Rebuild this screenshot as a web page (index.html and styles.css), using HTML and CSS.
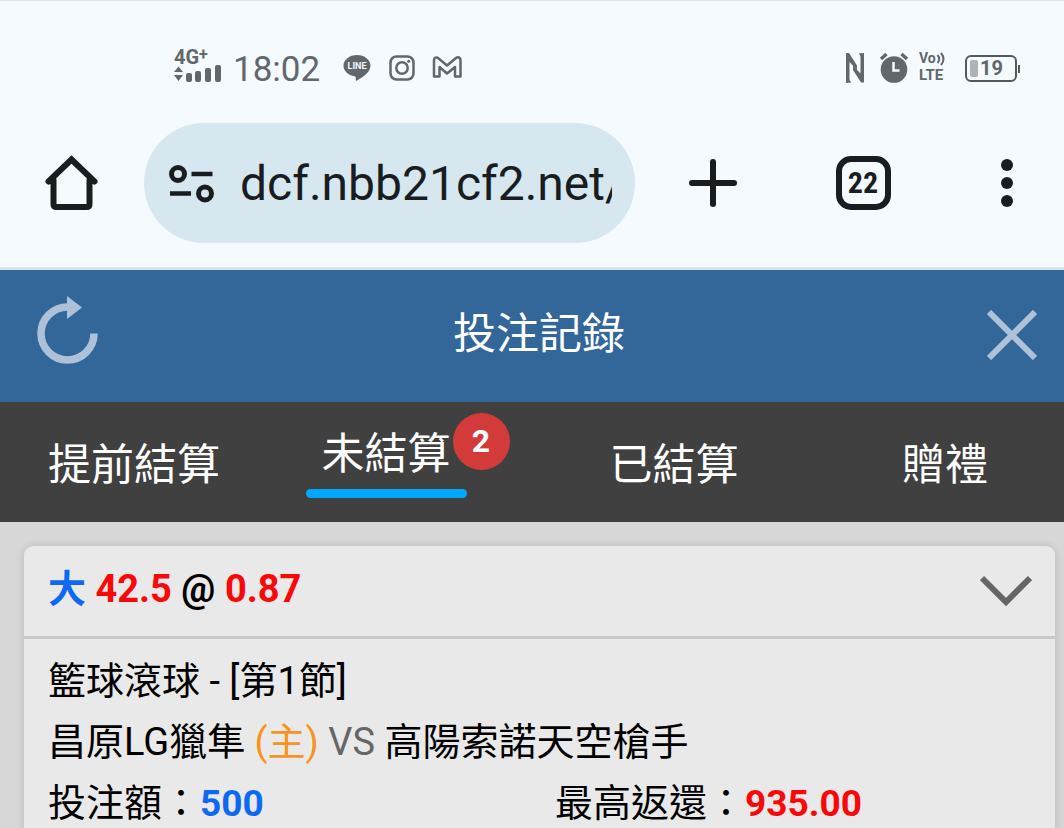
FILE: index.html
```html
<!DOCTYPE html>
<html lang="zh-Hant">
<head>
<meta charset="utf-8">
<meta name="viewport" content="width=device-width, initial-scale=1">
<title>投注記錄</title>
<link rel="stylesheet" href="styles.css">
</head>
<body>
<div class="status-bar">
  <div class="status-group status-left">
    <div class="signal">
      <span class="signal-label">4G<span class="plus">+</span></span>
      <svg width="50" height="17" viewBox="0 0 50 17" fill="currentColor" aria-hidden="true">
        <path d="M0 7 4.500 1.500 9 7zM0 10h9l-4.500 6z"/>
        <rect x="12" y="8" width="6" height="9" rx="2"/><rect x="21" y="6" width="6" height="11" rx="2"/><rect x="31" y="3" width="6" height="14" rx="2"/><rect x="41" y="0" width="6" height="17" rx="2"/>
      </svg>
    </div>
    <span class="clock">18:02</span>
    <svg class="app-line" width="28" height="28" viewBox="0 0 28 28" aria-hidden="true">
      <path fill="currentColor" d="M14 1C6.500 1 .500 5.800.500 11.700c0 5.200 4.700 9.600 11 10.500 1.600.4 1.500 1.700 1.200 3.800 0 .8.500 1 1.400.500 3.500-2 13.400-8 13.400-14.800C27.500 5.800 21.500 1 14 1z"/>
      <text x="14" y="15" text-anchor="middle" class="line-text">LINE</text>
    </svg>
    <svg class="app-insta" width="26" height="26" viewBox="0 0 26 26" fill="none" stroke="currentColor" stroke-width="2.500" aria-hidden="true">
      <rect x="1.500" y="1.500" width="23" height="23" rx="6"/><circle cx="13" cy="13" r="5.700"/><circle cx="19.700" cy="6.300" r="1.500" fill="currentColor" stroke="none"/>
    </svg>
    <svg width="30" height="24" viewBox="0 0 30 24" fill="none" stroke="currentColor" stroke-width="2.500" stroke-linejoin="round" aria-hidden="true">
      <path d="M2 20.500V4c0-2.500 2.500-3 4-2l9 7.500L24 2c2-1.500 4.500-.5 4.500 2v16.500H23V11l-8 6.500L7.500 11v9.500z"/>
    </svg>
  </div>
  <div class="status-group status-right">
    <svg width="20" height="32" viewBox="0 0 20 32" fill="currentColor" aria-hidden="true">
      <path d="M1 1h3l8 12.500v4.500L4.500 10v17q0 2.500 2 3.500L1 31z"/>
      <path d="M19 30.500h-3L8 18v-4.500L15.500 21.500V5q0-2.500-2-3.500l5.500-.5z"/>
    </svg>
    <svg class="alarm" width="30" height="32" viewBox="0 0 30 32" aria-hidden="true">
      <circle cx="15" cy="17.500" r="13.300" fill="currentColor"/>
      <path d="M2 7 7.500 2M28 7l-5.500-5" stroke="currentColor" stroke-width="3.500" fill="none"/>
      <path d="M14.500 10v8.500h6" fill="none" stroke="#f5faff" stroke-width="2.500"/>
    </svg>
    <svg class="volte" width="30" height="34" viewBox="0 0 30 34" aria-hidden="true">
      <text x="0" y="12" class="vo-text">Vo</text><text x="0" y="29" class="lte-text">LTE</text>
      <path d="M18.500 4q3.500 4 0 8M22 2q5 6 0 12" fill="none" stroke="currentColor" stroke-width="2"/>
    </svg>
    <div class="battery"><span class="battery-level"></span>19</div>
  </div>
</div>

<div class="toolbar">
  <button class="tool-button home" aria-label="首頁">
    <svg width="56" height="56" viewBox="0 0 56 56" fill="none" stroke="currentColor" stroke-width="6" stroke-linecap="round">
      <path d="M4.500 26.500 27.500 4.500l23 22M9.500 25v24q0 3 3 3h30q3 0 3-3V25"/>
    </svg>
  </button>
  <div class="address">
    <svg width="46" height="38" viewBox="0 0 46 38" fill="none" stroke="currentColor" stroke-width="5" aria-hidden="true">
      <circle cx="9" cy="9" r="6.500"/><path d="M22.500 9h21M1 28.500h21" stroke-width="4.500"/><circle cx="36" cy="28.500" r="6.500"/>
    </svg>
    <input class="url" type="text" aria-label="網址" value="dcf.nbb21cf2.net/" readonly>
  </div>
  <button class="tool-button add" aria-label="新分頁">
    <svg width="48" height="48" viewBox="0 0 48 48" fill="none" stroke="currentColor" stroke-width="6" stroke-linecap="round"><path d="M24 3v42M3 24h42"/></svg>
  </button>
  <button class="tool-button pages"><span class="page-count">22</span></button>
  <button class="tool-button more" aria-label="選單">
    <svg width="12" height="48" viewBox="0 0 12 48" fill="currentColor"><circle cx="6" cy="6" r="6"/><circle cx="6" cy="24" r="6"/><circle cx="6" cy="42" r="6"/></svg>
  </button>
</div>

<header class="page-header">
  <button class="header-button" aria-label="重新整理">
    <svg width="62" height="68" viewBox="0 0 62 68">
      <path d="M30.500 11A26.500 26.500 0 1 0 57 37.500" fill="none" stroke="currentColor" stroke-width="7.500"/><path d="M30 0 45 11.500 30 23z" fill="currentColor"/>
    </svg>
  </button>
  <h1 class="page-title">投注記錄</h1>
  <button class="header-button close" aria-label="關閉">
    <svg width="50" height="50" viewBox="0 0 50 50" fill="none" stroke="currentColor" stroke-width="6"><path d="m2 2 46 46M48 2 2 48"/></svg>
  </button>
</header>

<nav class="tabs">
  <a class="tab" href="#early">提前結算</a>
  <a class="tab active" href="#open" aria-current="page">未結算<span class="badge">2</span></a>
  <a class="tab" href="#settled">已結算</a>
  <a class="tab" href="#gifts">贈禮</a>
</nav>

<main class="content">
  <article class="bet">
    <header class="bet-header">
      <h2 class="pick"><span class="blue">大</span> <span class="red">42.5</span> @ <span class="red">0.87</span></h2>
      <button class="toggle" aria-label="收合">
        <svg width="52" height="32" viewBox="0 0 52 32" fill="none" stroke="currentColor" stroke-width="6"><path d="m2 3 24 24L50 3"/></svg>
      </button>
    </header>
    <div class="bet-body">
      <p class="row">籃球滾球 - [第1節]</p>
      <p class="row">昌原LG獵隼 <span class="host">(主)</span> <span class="versus">VS</span> 高陽索諾天空槍手</p>
      <div class="row amounts">
        <p class="amount">投注額：<strong class="blue">500</strong></p>
        <p class="amount">最高返還：<strong class="red">935.00</strong></p>
      </div>
    </div>
  </article>
</main>
</body>
</html>
```
FILE: styles.css
```css
* { box-sizing: border-box; }

body {
  margin: 0;
  min-height: 100vh;
  background: #d7d7d7;
  color: #000;
  font-family: Roboto, "Noto Sans CJK TC", sans-serif;
  overflow: hidden;
}

svg { display: block; flex: none; }
h1, h2, p { margin: 0; font-weight: 400; }

button {
  display: flex;
  align-items: center;
  justify-content: center;
  padding: 0;
  border: 0;
  background: none;
  color: inherit;
  font: inherit;
}

/* Phone status bar */
.status-bar {
  display: flex;
  justify-content: space-between;
  height: 123px;
  padding: 12px 47px 0 174px;
  border-top: 1px solid #e0e4e8;
  background: #f5faff;
  color: #62676b;
}
.status-group { display: flex; align-items: center; }
.signal { width: 50px; margin: 0 9px 6px 0; }
.signal-label {
  display: block;
  font: 700 20px/16px Roboto, sans-serif;
}
.plus { font-size: 16px; vertical-align: 4px; line-height: 1px; }
.clock { font-size: 35px; line-height: 40px; margin: 3px 23px 0 0; }
.app-line { margin-right: 18px; }
.app-insta { margin-right: 17px; }
.line-text { font: 700 9px Roboto, sans-serif; fill: #f5faff; }
.alarm { margin-left: 14px; }
.volte { margin-left: 10px; }
.vo-text { font: 700 14px Roboto, sans-serif; fill: currentColor; }
.lte-text { font: 700 15px Roboto, sans-serif; fill: currentColor; }
.battery {
  position: relative;
  display: flex;
  align-items: center;
  gap: 2px;
  width: 52px;
  height: 27px;
  margin-left: 16px;
  padding-left: 3px;
  border: 2px solid #55595c;
  border-radius: 6px;
  font-size: 20px;
  font-weight: 700;
}
.battery::after {
  content: "";
  position: absolute;
  right: -5px;
  top: 8px;
  width: 2px;
  height: 8px;
  background: #55595c;
}
.battery-level { width: 8px; height: 17px; border-radius: 2px; background: #aeb3b7; }

/* Browser toolbar */
.toolbar {
  display: flex;
  align-items: flex-start;
  height: 147px;
  border-bottom: 3px solid #d6e4ee;
  background: #f5faff;
  color: #191d1f;
}
.tool-button { flex: none; height: 120px; }
.home, .pages { width: 144px; }
.add { width: 156px; }
.more { width: 129px; justify-content: flex-end; padding-right: 51px; }
.address {
  display: flex;
  flex: 1;
  align-items: center;
  gap: 25px;
  min-width: 0;
  height: 120px;
  padding: 2px 23px 0 25px;
  border-radius: 60px;
  background: #d7e7ef;
}
.url {
  flex: 1;
  min-width: 0;
  padding: 0;
  border: 0;
  outline: 0;
  background: none;
  color: inherit;
  font: 400 48px/60px Roboto, sans-serif;
}
.page-count {
  width: 55px;
  height: 54px;
  border: 6px solid;
  border-radius: 15px;
  font: 700 30px/42px "Roboto Condensed", "Liberation Sans Narrow", Roboto, sans-serif;
}

/* Page header */
.page-header {
  display: flex;
  align-items: center;
  justify-content: space-between;
  height: 132px;
  padding: 0 27px 12px 37px;
  background: #336699;
  color: #fff;
}
.header-button { width: 62px; color: #adc2da; }
.close { width: 58px; justify-content: flex-end; padding-top: 10px; }
.page-title { padding-top: 8px; font-size: 43px; line-height: 60px; }

/* Tabs */
.tabs {
  display: grid;
  grid-template-columns: 268fr 236fr 340fr 202fr;
  align-items: center;
  justify-items: center;
  height: 120px;
  padding-right: 18px;
  background: #404040;
}
.tab {
  position: relative;
  padding: 6px 16px 0;
  color: #fff;
  font-size: 43px;
  line-height: 64px;
  text-decoration: none;
}
.active {
  margin-bottom: 4px;
  padding: 0 16px 3px;
  border-bottom: 9px solid transparent;
}
.active::after {
  content: "";
  position: absolute;
  right: 0;
  bottom: -9px;
  left: 0;
  height: 9px;
  border-radius: 5px;
  background: #00a8ff;
}
.badge {
  position: absolute;
  top: -9px;
  right: -43px;
  width: 57px;
  height: 57px;
  border-radius: 50%;
  background: #d33a3a;
  font-size: 32px;
  font-weight: 700;
  line-height: 57px;
  text-align: center;
}

/* Bet card */
.content { padding: 24px 9px 0 24px; }
.bet {
  border-radius: 9px;
  background: #e9e9e9;
  box-shadow: 0 0 9px rgba(0, 0, 0, 0.14);
}
.bet-header {
  display: flex;
  align-items: center;
  justify-content: space-between;
  height: 93px;
  padding: 0 23px 0 24px;
  border-bottom: 3px solid #c9c9c9;
}
.pick { font-size: 38px; font-weight: 700; line-height: 60px; padding-bottom: 4px; }
.toggle { color: #666; }
.bet-body { padding: 12px 24px; }
.row { font-size: 38px; line-height: 61px; white-space: nowrap; }
.amounts { display: grid; grid-template-columns: 507fr 476fr; }
.amount strong { font-size: 37px; font-weight: 700; }
.blue { color: #0d68f2; }
.red { color: #f80808; }
.host { color: #f7931e; }
.versus { color: #666; }
```
